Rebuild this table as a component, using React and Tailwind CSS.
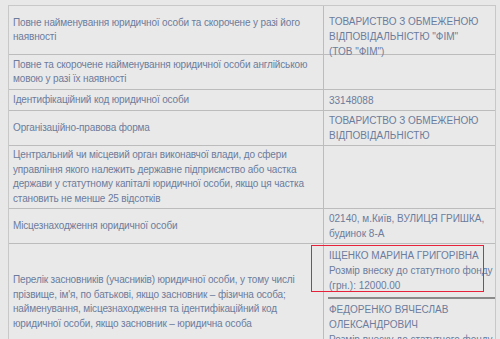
export default function App() {
  const cell = "text-[#bcbcbc] border-[#bcbcbc]";
  const txt = "text-[10px] tracking-[-0.15px] leading-[14.5px] text-[#6c7c9c]";
  const rtxt = "text-[10px] leading-[15px] text-[#6c7c9c]";
  return (
    <div className="w-[500px] h-[339px] overflow-hidden bg-[#e8e8e8] pt-[5px] pl-[8px]" style={{ fontFamily: '"Liberation Sans", Arial, sans-serif' }}>
      <div className="w-[488px] border-l border-t border-r border-[#c8c8c8] text-[#c8c8c8] bg-[#e9e9e9]">
        {/* Row 1 */}
        <div className={`flex h-[49px] border-b ${cell}`}>
          <div className={`w-[315px] pl-[4px] pr-[4px] flex items-center border-r ${cell}`}>
            <div className={txt}>Повне найменування юридичної особи та скорочене у разі його наявності</div>
          </div>
          <div className={`flex-1 pl-[5px] pt-[8px] ${rtxt}`}>
            <div>ТОВАРИСТВО З ОБМЕЖЕНОЮ</div>
            <div>ВІДПОВІДАЛЬНІСТЮ "ФІМ"</div>
            <div>(ТОВ "ФІМ")</div>
          </div>
        </div>
        {/* Row 2 */}
        <div className={`flex h-[35px] border-b ${cell}`}>
          <div className={`w-[315px] pl-[4px] pr-[4px] flex items-center border-r ${cell}`}>
            <div className={txt}>Повне та скорочене найменування юридичної особи англійською мовою у разі їх наявності</div>
          </div>
          <div className="flex-1" />
        </div>
        {/* Row 3 */}
        <div className={`flex h-[21px] border-b ${cell}`}>
          <div className={`w-[315px] pl-[4px] flex items-center border-r ${cell}`}>
            <div className={txt}>Ідентифікаційний код юридичної особи</div>
          </div>
          <div className={`flex-1 pl-[5px] flex items-center ${rtxt}`}>33148088</div>
        </div>
        {/* Row 4 */}
        <div className={`flex h-[35px] border-b ${cell}`}>
          <div className={`w-[315px] pl-[4px] flex items-center border-r ${cell}`}>
            <div className={txt}>Організаційно-правова форма</div>
          </div>
          <div className={`flex-1 pl-[5px] pt-[2px] ${rtxt}`}>
            <div>ТОВАРИСТВО З ОБМЕЖЕНОЮ</div>
            <div>ВІДПОВІДАЛЬНІСТЮ</div>
          </div>
        </div>
        {/* Row 5 */}
        <div className={`flex h-[63px] border-b ${cell}`}>
          <div className={`w-[315px] pl-[4px] pr-[4px] flex items-center border-r ${cell}`}>
            <div className={txt}>Центральний чи місцевий орган виконавчої влади, до сфери<br />управління якого належить державне підприємство або частка<br />держави у статутному капіталі юридичної особи, якщо ця частка<br />становить не менше 25 відсотків</div>
          </div>
          <div className="flex-1" />
        </div>
        {/* Row 6 */}
        <div className={`flex h-[35px] border-b ${cell}`}>
          <div className={`w-[315px] pl-[4px] flex items-center border-r ${cell}`}>
            <div className={txt}>Місцезнаходження юридичної особи</div>
          </div>
          <div className={`flex-1 pl-[5px] pt-[2px] ${rtxt}`}>
            <div>02140, м.Київ, ВУЛИЦЯ ГРИШКА,</div>
            <div>будинок 8-А</div>
          </div>
        </div>
        {/* Row 7 */}
        <div className="relative flex h-[116px]">
          <div className={`w-[315px] pl-[4px] pr-[4px] flex items-center border-r ${cell}`}>
            <div className={txt}>Перелік засновників (учасників) юридичної особи, у тому числі<br />прізвище, ім'я, по батькові, якщо засновник – фізична особа;<br />найменування, місцезнаходження та ідентифікаційний код<br />юридичної особи, якщо засновник – юридична особа</div>
          </div>
          <div className={`flex-1 pt-[4px] ${rtxt}`}>
            <div className="pl-[5px] pb-[4px]">
              <div>ІЩЕНКО МАРИНА ГРИГОРІВНА</div>
              <div>Розмір внеску до статутного фонду</div>
              <div>(грн.): 12000.00</div>
            </div>
            <div className="ml-[4px] h-[2px] bg-[#8a8a8a]" />
            <div className="pl-[5px] pt-[3px]">
              <div>ФЕДОРЕНКО ВЯЧЕСЛАВ</div>
              <div>ОЛЕКСАНДРОВИЧ</div>
              <div>Розмір внеску до статутного фонду</div>
            </div>
          </div>
          <div className="absolute left-[302px] top-[1px] w-[173px] h-[47px] border border-[#e8213a] text-[#e8213a]" />
        </div>
      </div>
    </div>
  );
}
